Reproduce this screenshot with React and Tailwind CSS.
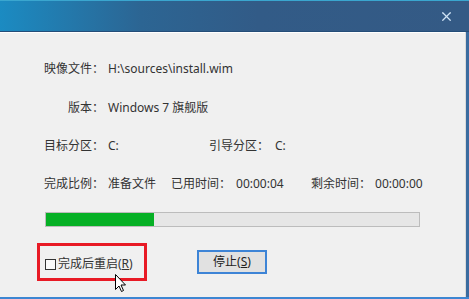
import { X } from 'lucide-react'

const font = "font-['Noto_Sans','Noto_Sans_CJK_SC',sans-serif]"

function Label({ children, w = 'w-[63px]' }) {
  return <span className={`${w} shrink-0 text-right`}>{children}</span>
}

export default function App() {
  return (
    <div className={`w-[469px] h-[299px] flex flex-col bg-[#f0f0f0] text-[12px] text-[#333] ${font}`}>
      {/* title bar */}
      <div className="h-[32px] shrink-0 flex items-center justify-end pr-[15px] bg-[linear-gradient(90deg,#1b8bc2_0%,#2c6593_30%,#325b87_55%,#345a85_100%)] border-t border-[#3aa6cf] border-b border-b-[#244d78]">
        <X size={15} strokeWidth={2} className="text-[#cfe3f5]" />
      </div>

      <div className="flex-1 flex border-b-2 border-[#3d86d2]">
        <div className="flex-1 flex flex-col pl-[41px] pt-[27px] border-t border-white">
          <div className="flex items-center h-[18px]">
            <Label>映像文件：</Label>
            <span className="ml-[4px]">H:\sources\install.wim</span>
          </div>
          <div className="flex items-center h-[18px] mt-[21px]">
            <Label>版本：</Label>
            <span className="ml-[4px]">Windows 7 旗舰版</span>
          </div>
          <div className="flex items-center h-[18px] mt-[20px]">
            <Label>目标分区：</Label>
            <span className="ml-[4px] w-[101px]">C:</span>
            <span>引导分区：</span>
            <span className="ml-[6px]">C:</span>
          </div>
          <div className="flex items-center h-[18px] mt-[20px]">
            <Label>完成比例：</Label>
            <span className="ml-[4px] w-[63px]">准备文件</span>
            <span>已用时间：</span>
            <span className="ml-[5px] w-[75px]">00:00:04</span>
            <span>剩余时间：</span>
            <span className="ml-[4px]">00:00:00</span>
          </div>

          {/* progress */}
          <div className="mt-[19px] ml-[4px] w-[375px] h-[15px] border border-[#bcbcbc] bg-[#e6e6e6]">
            <div className="h-full w-[108px] bg-[#06b025]" />
          </div>

          <div className="flex items-center mt-[16px] -ml-[4px]">
            <div className="relative w-[110px] h-[38px] border-[3px] border-[#e81a25] flex items-center pl-[5px] pt-[4px]">
              <span className="w-[11px] h-[11px] border border-[#333] bg-[#fafafa] mt-[1px]" />
              <span className="ml-[2px]">
                完成后重启(<span className="underline">R</span>)
              </span>
              <svg className="absolute left-[75px] top-[28px]" width="12" height="19" viewBox="0 0 12 19">
                <path d="M0.5 0.5 L0.5 15.5 L4 12 L6.5 17.5 L8.5 16.5 L6 11 L10.5 11 Z" fill="#fff" stroke="#000" strokeWidth="1" strokeLinejoin="round" />
              </svg>
            </div>
            <button className="ml-[50px] w-[70px] h-[24px] border-2 border-[#3d84d6] bg-[#e1e1e1] text-[12px] text-[#222] flex items-center justify-center">
              停止(<span className="underline">S</span>)
            </button>
          </div>
        </div>
        <div className="w-[4px] flex">
          <div className="w-[1px] bg-[#dadada]" />
          <div className="w-[3px] bg-[#3a6b9f]" />
        </div>
      </div>
    </div>
  )
}
